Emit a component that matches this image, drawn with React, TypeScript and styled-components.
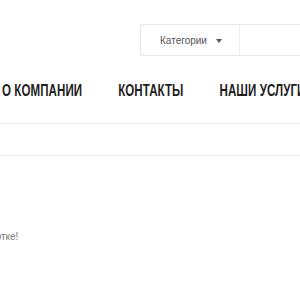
import React from "react";
import styled, { createGlobalStyle } from "styled-components";

const Global = createGlobalStyle`
  html, body { margin: 0; padding: 0; background: #fff; }
  body { font-family: "Liberation Sans", Arial, sans-serif; overflow: hidden; width: 300px; height: 300px; }
`;

const Page = styled.div`
  width: 300px;
  height: 300px;
  overflow: hidden;
  display: flex;
  flex-direction: column;
`;

const TopBar = styled.div`
  display: flex;
  justify-content: flex-end;
  padding-top: 24px;
`;

const SearchBox = styled.div`
  display: flex;
  width: 160px;
  height: 32px;
  border: 1px solid #e6e6e6;
  border-right: none;
  border-radius: 3px 0 0 3px;
  box-sizing: border-box;
`;

const CatButton = styled.div`
  width: 99px;
  display: flex;
  align-items: center;
  justify-content: center;
  gap: 9px;
  padding-left: 2px;
  box-sizing: border-box;
  border-right: 1px solid #eeeeee;
  font-size: 10px;
  color: #555;
`;

const Caret = styled.span`
  width: 0;
  height: 0;
  border-left: 3px solid transparent;
  border-right: 3px solid transparent;
  border-top: 4px solid #555;
  margin-top: 1px;
`;

const Nav = styled.nav`
  height: 68px;
  padding: 25px 0 0 2px;
  box-sizing: border-box;
  border-bottom: 1px solid #ececec;
  overflow: hidden;
`;

const NavList = styled.div`
  display: flex;
  gap: 51.5px;
  white-space: nowrap;
  transform: scaleX(0.7);
  transform-origin: left center;
`;

const NavItem = styled.span`
  font-family: "Liberation Sans", Arial, sans-serif;
  font-weight: bold;
  font-size: 16.5px;
  line-height: 19px;
  color: #1e1e1e;
  letter-spacing: 0.1px;
`;

const Strip = styled.div`
  height: 31px;
  border-bottom: 1px solid #ececec;
`;

const Message = styled.p`
  margin: 75px 0 0 -103px;
  font-size: 10px;
  line-height: 12px;
  color: #777;
  white-space: nowrap;
`;

export default function App() {
  return (
    <Page>
      <Global />
      <TopBar>
        <SearchBox>
          <CatButton>
            Категории <Caret />
          </CatButton>
        </SearchBox>
      </TopBar>
      <Nav>
        <NavList>
          <NavItem>О КОМПАНИИ</NavItem>
          <NavItem>КОНТАКТЫ</NavItem>
          <NavItem>НАШИ УСЛУГИ</NavItem>
        </NavList>
      </Nav>
      <Strip />
      <Message>Ваша заявка в обработке!</Message>
    </Page>
  );
}
